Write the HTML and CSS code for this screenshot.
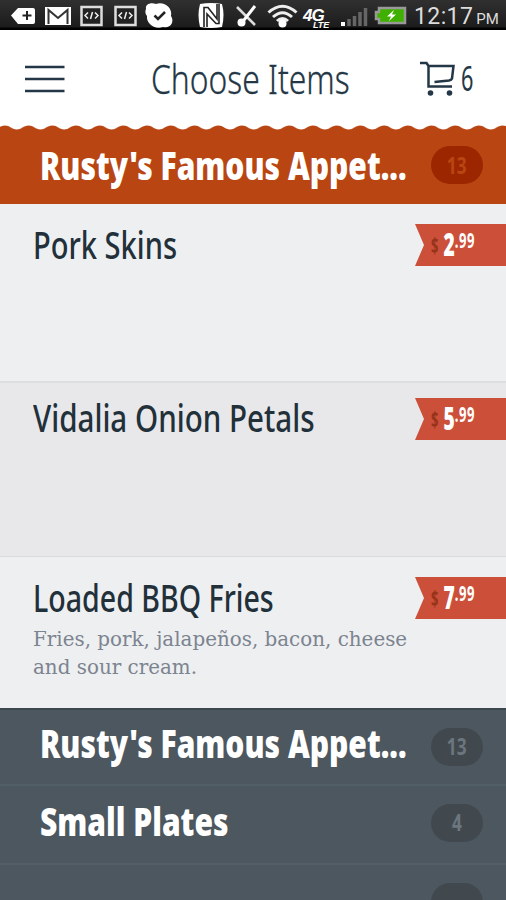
FILE: index.html
```
<!DOCTYPE html>
<html lang="en">
<head>
  <meta charset="utf-8">
  <title>Choose Items</title>
  <link rel="stylesheet" href="styles.css">
</head>
<body>
  <div class="app">
    <div class="status-bar">
      <svg class="status-icons" width="410" height="30" viewBox="0 0 410 30">
        <!-- notifications -->
        <path d="M11 15.500L18 8H33a2 2 0 0 1 2 2V22a2 2 0 0 1-2 2H18Z" fill="#fff"/>
        <path d="M27 11v9M22.500 15.500h9" stroke="#222" stroke-width="2"/>
        <rect x="45" y="7" width="26" height="18" fill="#fff"/>
        <path d="M48.500 24V10L58 18L67.500 10V24" fill="none" stroke="#333" stroke-width="2"/>
        <g id="code">
          <rect x="81.500" y="7" width="20" height="18" fill="#222" stroke="#ddd" stroke-width="2.500"/>
          <path d="M88 12.500L85 15.500L88 18.500M95 12.500L98 15.500L95 18.500M92.500 12L90.500 19" fill="none" stroke="#eee" stroke-width="1.500"/>
        </g>
        <use href="#code" x="34"/>
        <path d="M146 9C145 4 151 2 156 4C164 1 173 8 171 16C175 22 170 29 163 27C154 30 146 23 147 16C145 14 145 11 146 9Z" fill="#fff"/>
        <path d="M154.500 15.500L158 19L165 12" fill="none" stroke="#222" stroke-width="2.500"/>
        <!-- system -->
        <path d="M200 4Q211 2 222 4Q225 15 222 27Q211 29 200 27Q197 15 200 4Z" fill="#fff"/>
        <path d="M204 27V7.500H208L217 19V4M207 27V14L216 23.500H219V4" fill="none" stroke="#222" stroke-width="1.600"/>
        <path d="M237 7L255 25" stroke="#ddd" stroke-width="2.500"/>
        <path d="M255 6L244 20" fill="none" stroke="#fff" stroke-width="3"/>
        <circle cx="241.500" cy="22.500" r="4" fill="#fff"/>
        <path d="M268.500 12.500Q282.500 0 296.500 12.500M273 17Q282.500 8.500 292 17M277 21Q282.500 16 288 21" fill="none" stroke="#eee" stroke-width="3"/>
        <circle cx="282.500" cy="23.500" r="4" fill="#fff"/>
        <text class="net" x="303" y="21">4G<tspan class="lte" x="313" y="28">LTE</tspan></text>
        <rect x="341" y="22" width="4" height="4" fill="#fff"/>
        <path d="M349 19v7M354.500 16v10M360 12v14M365.500 8v18" stroke="#666" stroke-width="3.500"/>
        <path d="M379 8H405V23H379V19H376V12H379Z" fill="#3fb000" stroke="#999" stroke-width="2.500"/>
        <path d="M394 10L387 16.500H391L389 21L396 14.500H392Z" fill="#fff"/>
      </svg>
      <div class="clock">12:17<span>PM</span></div>
    </div>

    <div class="header">
      <svg class="menu-icon" width="40" height="30" viewBox="0 0 40 30">
        <path d="M0 2H39.500M0 14H39.500M0 26H39.500" stroke="#243746" stroke-width="2.500"/>
      </svg>
      <h1><span class="squeeze title">Choose Items</span></h1>
      <svg class="cart-icon" width="36" height="36" viewBox="0 0 36 36">
        <path d="M0 2H6.500L8.500 5V25.500H32M8.500 5H33.500L32 17.500Q31.500 19 29 19.500L14.500 21" fill="none" stroke="#243746" stroke-width="2.500"/>
        <circle cx="10.500" cy="32" r="2.800" fill="#243746"/>
        <circle cx="29.500" cy="32" r="2.800" fill="#243746"/>
      </svg>
      <div class="cart-count"><span class="squeeze count">6</span></div>
    </div>

    <svg class="scallops" width="506" height="5">
      <defs>
        <pattern id="wave" x="-7" width="23.700" height="5" patternUnits="userSpaceOnUse">
          <path d="M0 4.500C5 4.500 6.500 .5 11.850 .5S18.700 4.500 23.700 4.500V5H0Z" fill="#b94612"/>
        </pattern>
      </defs>
      <rect width="506" height="5" fill="url(#wave)"/>
    </svg>
    <div class="category active">
      <h2><span class="squeeze long">Rusty's Famous Appet...</span></h2>
      <div class="badge"><span>13</span></div>
    </div>

    <div class="item">
      <h3><span class="squeeze">Pork Skins</span></h3>
      <div class="price"><svg width="92" height="44" viewBox="0 0 92 44"><path d="M1 1H92V43H1L10 22Z"/></svg><div class="amount"><i>$</i><b>2</b><sup>.99</sup></div></div>
    </div>
    <div class="item alt">
      <h3><span class="squeeze vidalia">Vidalia Onion Petals</span></h3>
      <div class="price"><svg width="92" height="44" viewBox="0 0 92 44"><path d="M1 1H92V43H1L10 22Z"/></svg><div class="amount"><i>$</i><b>5</b><sup>.99</sup></div></div>
    </div>
    <div class="item last">
      <div class="details">
        <h3><span class="squeeze fries">Loaded BBQ Fries</span></h3>
        <p>Fries, pork, jalapeños, bacon, cheese<br>and sour cream.</p>
      </div>
      <div class="price"><svg width="92" height="44" viewBox="0 0 92 44"><path d="M1 1H92V43H1L10 22Z"/></svg><div class="amount"><i>$</i><b>7</b><sup>.99</sup></div></div>
    </div>

    <div class="category first">
      <h2><span class="squeeze long">Rusty's Famous Appet...</span></h2>
      <div class="badge"><span>13</span></div>
    </div>
    <div class="category">
      <h2><span class="squeeze long">Small Plates</span></h2>
      <div class="badge"><span>4</span></div>
    </div>
    <div class="category">
      <h2></h2>
      <div class="badge"></div>
    </div>
  </div>
</body>
</html>
```
FILE: styles.css
```
* {
  box-sizing: border-box;
}
body {
  margin: 0;
  background: #fff;
  font-family: "Noto Sans", sans-serif;
}
h1, h2, h3, p {
  margin: 0;
}
.app {
  width: 506px;
  height: 900px;
  overflow: hidden;
  display: flex;
  flex-direction: column;
}
.app > * {
  flex-shrink: 0;
}

/* condensed headings */
.squeeze {
  display: inline-block;
  white-space: nowrap;
  transform-origin: 0 50%;
  transform: scaleX(0.765);
}
.squeeze.title {
  transform: scaleX(0.795);
}
.squeeze.count {
  transform: scaleX(0.62);
}
.squeeze.long {
  transform: scaleX(0.79);
}
.squeeze.vidalia {
  transform: scaleX(0.778);
}
.squeeze.fries {
  transform: scaleX(0.752);
}

/* status bar */
.status-bar {
  display: flex;
  height: 30px;
  background: linear-gradient(#303030, #1c1c1c 27px, #000 28px);
}
.net {
  font: italic bold 17px "Liberation Sans", sans-serif;
  letter-spacing: -1px;
  fill: #fff;
}
.lte {
  font-size: 9px;
  letter-spacing: 0;
}
.clock {
  padding-left: 4px;
  color: #ddd;
  font: 23px/34px Roboto, sans-serif;
  letter-spacing: 0.4px;
  white-space: nowrap;
}
.clock span {
  margin-left: 3px;
  font-size: 15px;
  letter-spacing: 0;
}

/* header */
.header {
  display: flex;
  height: 95px;
  color: #243746;
}
.menu-icon {
  margin: 35px 0 0 25px;
}
.header h1 {
  width: 270px;
  padding-left: 86px;
  font-size: 40px;
  font-weight: 300;
  line-height: 98px;
  -webkit-text-stroke: 0.3px #243746;
}
.cart-icon {
  margin: 31px 0 0 85px;
}
.cart-count {
  width: 40px;
  padding-left: 5px;
  font-size: 35px;
  line-height: 96px;
}
.scallops {
  display: block;
}

/* category bars */
.category {
  display: flex;
  justify-content: space-between;
  height: 79px;
  padding: 18px 23px 0 40px;
  background: #4c575f;
  border-top: 2px solid #535f67;
  color: #fff;
}
.category h2 {
  width: 370px;
  margin-top: -3px;
  font-size: 38px;
  font-weight: 900;
  line-height: 40px;
}
.badge {
  display: flex;
  align-items: center;
  justify-content: center;
  width: 52px;
  height: 38px;
  padding-bottom: 3px;
  border-radius: 19px;
  background: #41494e;
  color: #6b767e;
  font-size: 24px;
  font-weight: 700;
}
.badge span {
  transform: scaleX(0.72);
}
.category.active {
  height: 74px;
  padding-top: 16px;
  background: #b94612;
  border: none;
}
.category.active h2 {
  margin-top: -1px;
}
.active .badge {
  padding-bottom: 1px;
  background: #9c2600;
  color: #b94612;
}
.category.first {
  height: 76px;
  border-color: #3c484d;
}
.category.first h2 {
  margin-top: -5px;
}

/* menu items */
.item {
  display: flex;
  justify-content: space-between;
  height: 177px;
  padding: 19px 0 0 33px;
  background: #eeeff1;
}
.item.alt {
  height: 176px;
  padding-top: 14px;
  background: #e8e8ea;
  border-top: 2px solid #dcdee0;
  border-bottom: 1px solid #d9dadd;
}
.item.last {
  height: 151px;
}
.details {
  width: 380px;
  min-width: 0;
}
.item h3 {
  color: #22303a;
  font-size: 38px;
  font-weight: 500;
  line-height: 42px;
}
.item.alt h3 {
  line-height: 40px;
}
.item p {
  margin-top: 7px;
  color: #7c8490;
  font: 20.500px/28px "DejaVu Serif", serif;
  white-space: nowrap;
  transform: scaleX(0.97);
  transform-origin: 0 0;
}
.price {
  display: grid;
  width: 92px;
  height: 44px;
  flex-shrink: 0;
}
.price > * {
  grid-area: 1 / 1;
}
.price path {
  fill: #cc5039;
}
.amount {
  display: flex;
  padding-left: 17px;
  color: #fff;
  font-weight: 700;
  line-height: 42px;
  transform: scaleX(0.62);
  transform-origin: 17px 0;
}
.amount i {
  width: 20px;
  color: #963319;
  font-size: 21px;
  font-style: normal;
  line-height: 44px;
}
.amount b {
  font-size: 31px;
}
.amount sup {
  font-size: 21px;
  line-height: 35px;
  letter-spacing: 1px;
  vertical-align: baseline;
}
```
